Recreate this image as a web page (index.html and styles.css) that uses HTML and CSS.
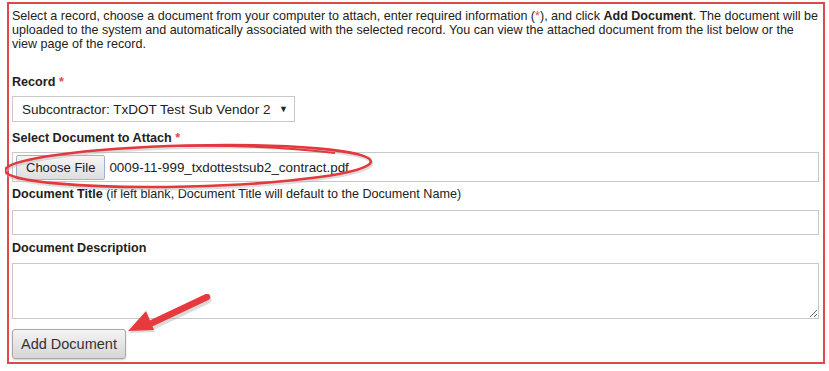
FILE: index.html
```html
<!DOCTYPE html>
<html lang="en">
<head>
    <meta charset="UTF-8">
    <meta name="viewport" content="width=device-width, initial-scale=1.0">
    <title>Add Document</title>
    <link rel="stylesheet" href="styles.css">
</head>
<body>

    <!-- Attach document form -->
    <div class="doc-form">
        <p class="intro">
            Select a record, choose a document from your computer to attach, enter required information (<span class="req">*</span>), and click <b>Add Document</b>. The document will be<br>
            uploaded to the system and automatically associated with the selected record. You can view the attached document from the list below or the<br>
            view page of the record.
        </p>

        <div class="field field-record">
            <div class="label">Record <span class="req">*</span></div>
            <div class="select-box">
                <span>Subcontractor: TxDOT Test Sub Vendor 2</span>
                <span class="caret">&#9660;</span>
            </div>
        </div>

        <div class="field field-file">
            <div class="label">Select Document to Attach <span class="req">*</span></div>
            <div class="file-box">
                <button class="file-btn" type="button">Choose File</button>
                <span class="file-name">0009-11-999_txdottestsub2_contract.pdf</span>
            </div>
        </div>

        <div class="field field-title">
            <div class="label">Document Title <span class="hint">(if left blank, Document Title will default to the Document Name)</span></div>
            <input class="text-input" type="text">
        </div>

        <div class="field field-desc">
            <div class="label">Document Description</div>
            <textarea class="text-area"></textarea>
        </div>

        <button class="add-btn" type="button">Add Document</button>

        <!-- Annotations drawn over the screenshot -->
        <svg class="mark-ellipse" width="390" height="60" viewBox="0 0 390 60">
            <ellipse cx="184" cy="27" rx="183" ry="20.5" transform="rotate(-1.4 184 27)" fill="none" stroke="#bbb" stroke-width="3" opacity="0.5"/>
            <ellipse cx="183" cy="25" rx="183" ry="20.5" transform="rotate(-1.4 183 25)" fill="none" stroke="#e2383e" stroke-width="2.6"/>
            <path d="M170 5 C230 4 290 7 330 12" fill="none" stroke="#e2383e" stroke-width="2"/>
        </svg>

        <svg class="mark-arrow" width="100" height="60" viewBox="0 0 100 60">
            <path d="M82 4 L27 30" stroke="#999" stroke-width="7" stroke-linecap="round" opacity="0.35" transform="translate(1 2)"/>
            <path d="M82 3 L27 29" stroke="#e8393f" stroke-width="6.5" stroke-linecap="round"/>
            <polygon points="3,37 21,17 29,36" fill="#999" opacity="0.35" transform="translate(1 2)"/>
            <polygon points="3,37 21,17 29,36" fill="#e8393f"/>
        </svg>
    </div>

</body>
</html>
```

FILE: styles.css
```css
body {
    font-family: 'Liberation Sans', Arial, sans-serif;
    background-color: #fff;
    color: #222;
    margin: 0;
    padding: 0;
}

.doc-form {
    position: relative;
    margin: 2px 4px 0 7px;
    padding: 5px 4px 3px 3px;
    border: 2px solid #e0474c;
    font-size: 12.6px;
}

.intro {
    margin: 0 -6px 0 0;
    font-size: 12.55px;
    line-height: 14px;
    white-space: nowrap;
}

.req {
    color: #e0474c;
}

.field-record {
    margin-top: 23px;
}

.field-file {
    margin-top: 8px;
}

.field-title {
    margin-top: 4px;
}

.field-desc {
    margin-top: 5px;
}

.label {
    font-weight: bold;
    line-height: 16px;
    margin-bottom: 6px;
}

.field-title .label {
    margin-bottom: 8px;
}

.field-desc .label {
    margin-bottom: 7px;
}

.label .hint {
    font-weight: normal;
}

.select-box {
    display: inline-flex;
    align-items: center;
    justify-content: space-between;
    box-sizing: border-box;
    width: 283px;
    height: 26px;
    padding: 0 6px 0 9px;
    border: 1px solid #c8c8c8;
    font-size: 13.5px;
    white-space: nowrap;
}

.select-box .caret {
    font-size: 9px;
}

.file-box {
    display: flex;
    align-items: center;
    box-sizing: border-box;
    height: 30px;
    padding: 0 3px;
    border: 1px solid #c8c8c8;
    font-size: 13.4px;
}

.file-btn {
    height: 25px;
    padding: 0 9px;
    margin-right: 4px;
    font-family: inherit;
    font-size: 13px;
    color: #222;
    background: linear-gradient(#f6f6f6, #dedede);
    border: 1px solid #9fb3cf;
    border-radius: 2px;
}

.text-input,
.text-area {
    display: block;
    box-sizing: border-box;
    width: 100%;
    border: 1px solid #c8c8c8;
    margin: 0;
    font-family: inherit;
}

.text-input {
    height: 25px;
}

.text-area {
    height: 56px;
    resize: vertical;
}

.add-btn {
    display: block;
    margin-top: 10px;
    height: 30px;
    padding: 0 8px;
    font-family: inherit;
    font-size: 14.5px;
    color: #333;
    background: linear-gradient(#f4f4f4, #d6d6d6);
    border: 1px solid #a8a8a8;
    border-radius: 3px;
    box-shadow: 0 1px 2px rgba(0, 0, 0, 0.2);
}

.mark-ellipse {
    position: absolute;
    left: -4px;
    top: 137px;
}

.mark-arrow {
    position: absolute;
    left: 116px;
    top: 290px;
}
```
